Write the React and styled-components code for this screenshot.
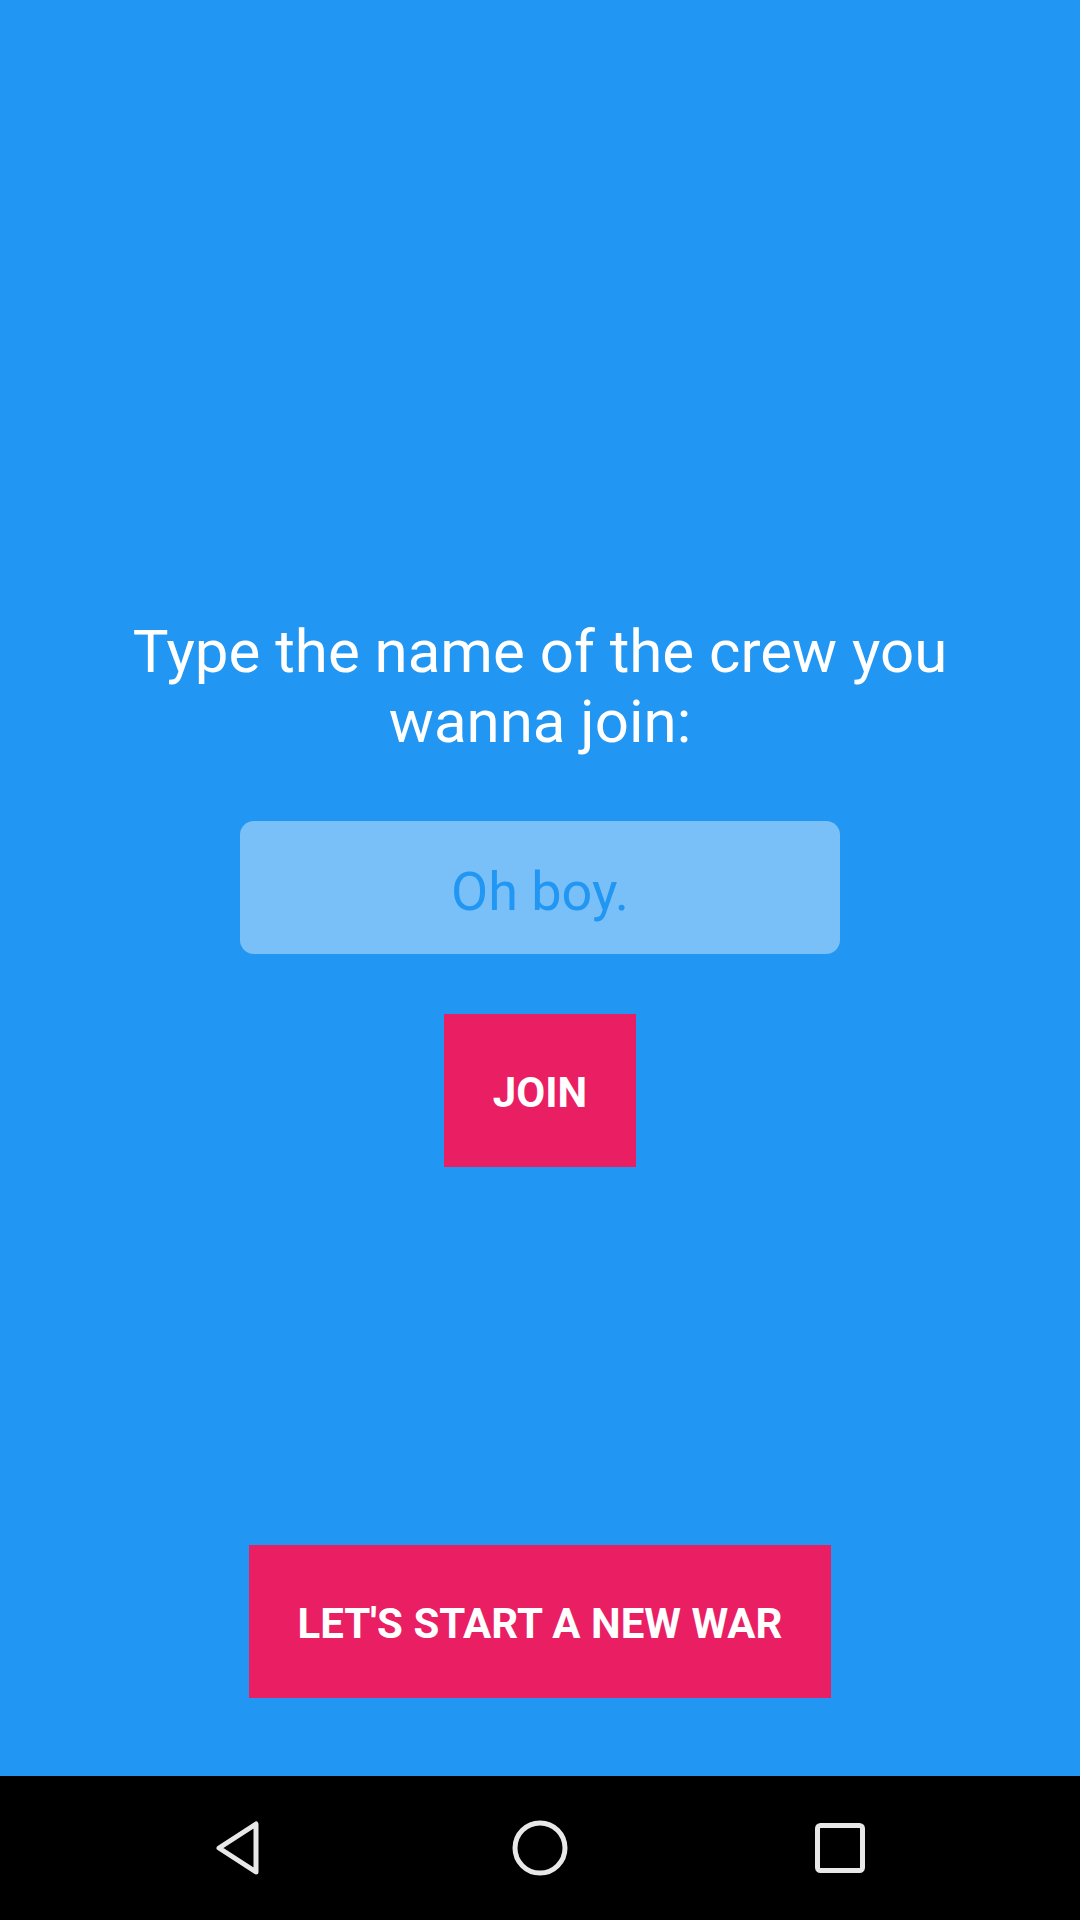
import React from "react";
import styled, { createGlobalStyle } from "styled-components";

const GlobalStyle = createGlobalStyle`
    html, body {
        margin: 0;
        padding: 0;
        background: #2196F3;
    }
    body {
        font-family: Roboto, "Noto Sans", "Liberation Sans", sans-serif;
    }
`;

const App = () => {
    return (
        <>
            <GlobalStyle />
            <Screen>
                <Content>
                    <Title>Type the name of the crew you wanna join:</Title>
                    <NameInput placeholder="Oh boy." />
                    <PinkButton $width="192px">Join</PinkButton>
                    <Spacer />
                    <PinkButton $width="582px">Let's start a new war</PinkButton>
                </Content>
                <NavBar>
                    <NavIcon viewBox="0 0 56 56">
                        <path d="M44 4 L44 52 L7 28 Z" fill="none" stroke="#e8e8e8" strokeWidth="5" strokeLinejoin="round" />
                    </NavIcon>
                    <NavIcon viewBox="0 0 56 56">
                        <circle cx="28" cy="28" r="25" fill="none" stroke="#e8e8e8" strokeWidth="5" />
                    </NavIcon>
                    <NavIcon viewBox="0 0 56 56">
                        <rect x="5.5" y="5.5" width="45" height="45" rx="3" fill="none" stroke="#e8e8e8" strokeWidth="5" />
                    </NavIcon>
                </NavBar>
            </Screen>
        </>
    );
};
export default App;

const Screen = styled.div`
    width: 1080px;
    height: 1920px;
    display: flex;
    flex-direction: column;
    background: #2196F3;
`;

//blue area above the system bar
const Content = styled.div`
    flex: 1;
    display: flex;
    flex-direction: column;
    align-items: center;
    padding: 617px 0 78px;
`;

const Title = styled.div`
    width: 880px;
    color: #ffffff;
    font-size: 60px;
    line-height: 70px;
    text-align: center;
`;

const NameInput = styled.input`
    box-sizing: border-box;
    margin-top: 64px;
    width: 600px;
    height: 133px;
    padding: 7px 0 0;
    border: none;
    outline: none;
    border-radius: 14px;
    background: rgba(255, 255, 255, 0.4);
    font-family: Roboto, "Noto Sans", sans-serif;
    font-size: 54px;
    text-align: center;
    color: #2196F3;

    &::placeholder {
        color: #2196F3;
        opacity: 1;
    }
`;

const PinkButton = styled.button`
    margin-top: 60px;
    width: ${(p) => p.$width};
    height: 153px;
    border: none;
    background: #E91E63;
    color: #ffffff;
    font-family: Roboto, "Noto Sans", sans-serif;
    font-size: 42px;
    font-weight: 700;
    text-transform: uppercase;
    padding: 4px 0 0;

    &:last-child {
        margin-top: 0;
    }
`;

const Spacer = styled.div`
    flex: 1;
`;

const NavBar = styled.div`
    height: 144px;
    background: #000000;
    display: flex;
    justify-content: center;
    align-items: center;
    gap: 244px;
`;

const NavIcon = styled.svg`
    width: 56px;
    height: 56px;
`;
